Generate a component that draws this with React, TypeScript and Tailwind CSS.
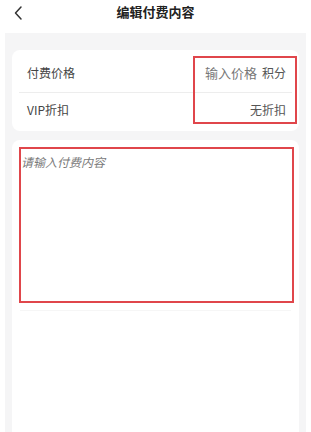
import React from "react";

const font = { fontFamily: '"Noto Sans CJK SC", "Noto Sans", sans-serif' };

const App = () => {
  return (
    <div className="w-[311px] h-[432px] bg-white flex flex-col overflow-hidden" style={font}>
      {/* header */}
      <div className="relative h-[33px] flex items-center justify-center shrink-0">
        <svg className="absolute left-[12px] top-[5px]" width="12" height="16" viewBox="0 0 12 16">
          <path d="M9 2 L3.5 8 L9 14" fill="none" stroke="#333" strokeWidth="1.5" strokeLinecap="round" strokeLinejoin="round" />
        </svg>
        <span className="text-[13px] font-semibold text-[#222] leading-none -mt-[10px]">编辑付费内容</span>
      </div>

      <div className="flex-1 mx-[5px] bg-[#f5f5f6] px-[7px] pt-[17px] flex flex-col gap-[9px]">
        {/* price card */}
        <div className="relative bg-white rounded-[8px] h-[81px] flex flex-col shrink-0">
          <div className="h-[42px] flex items-center justify-between pl-[15px] pr-[13px] pt-[4px]">
            <span className="text-[12px] text-[#444]">付费价格</span>
            <div className="flex items-center gap-[5px]">
              <span className="text-[13px] text-[#777]">输入价格</span>
              <span className="text-[12px] text-[#555]">积分</span>
            </div>
          </div>
          <div className="mx-[7px] h-px bg-[#ededed]" />
          <div className="flex-1 flex items-center justify-between pl-[15px] pr-[13px] pb-[5px]">
            <span className="text-[12px] text-[#444]">VIP折扣</span>
            <span className="text-[12px] text-[#555]">无折扣</span>
          </div>
          <div className="absolute left-[181px] top-[6px] w-[104px] h-[68px] border-2 border-[#e0464b]" />
        </div>

        {/* content card */}
        <div className="relative flex-1 bg-white rounded-t-[8px]">
          <div className="pl-[9px] pt-[16px] text-[12px] italic text-[#7a7a7a] leading-none">请输入付费内容</div>
          <div className="absolute left-[8px] right-[8px] top-[170px] h-px bg-[#f6f6f6]" />
          <div className="absolute left-[7px] top-[7px] w-[275px] h-[156px] border-2 border-[#e0464b]" />
        </div>
      </div>
    </div>
  );
};

export default App;
